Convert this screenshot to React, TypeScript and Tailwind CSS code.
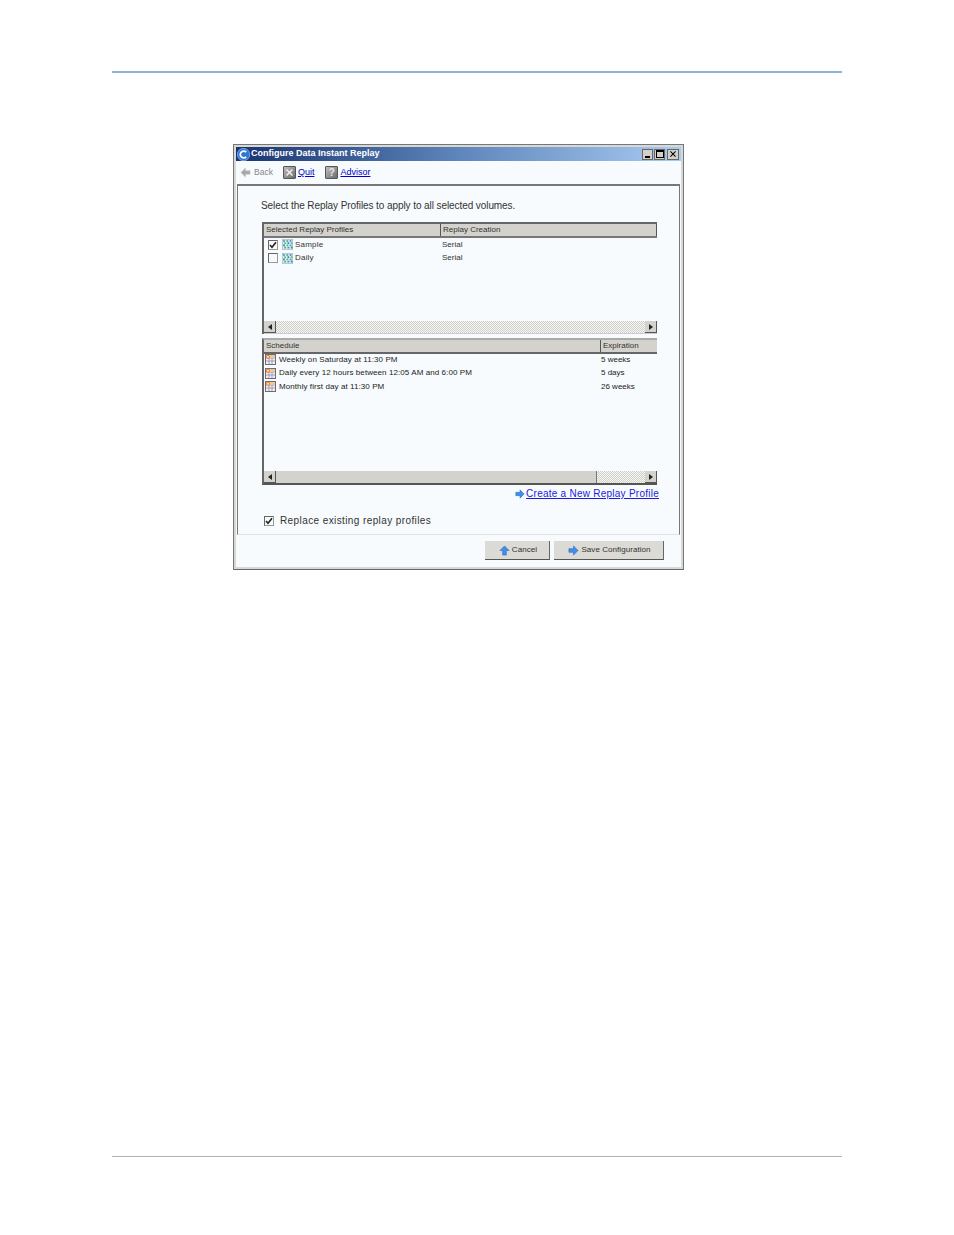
const font = "font-['Liberation_Sans',Arial,sans-serif]";
const dither = "bg-[repeating-conic-gradient(#d0cec8_0_25%,#f6f8f6_0_50%)] bg-[length:2px_2px]";

function ArrowIcon({ dir = "right", gray = false, size = 12 }: { dir?: "right" | "left" | "up"; gray?: boolean; size?: number }) {
  const rot = dir === "left" ? "rotate(180 6 6)" : dir === "up" ? "rotate(-90 6 6)" : undefined;
  return (
    <svg width={size} height={size} viewBox="0 0 12 12" className="shrink-0">
      <path
        d="M1 4h5V1l5 5-5 5V8H1z"
        transform={rot}
        fill={gray ? "#a8a8a8" : "#3f8fe8"}
        stroke={gray ? "#c4c4c4" : "#2a64c0"}
        strokeWidth="0.6"
      />
    </svg>
  );
}

function ProfileIcon() {
  const dots = [
    [1, 1, "#4a90e0"], [4, 1, "#58b070"], [7, 1, "#4a90e0"],
    [2, 3, "#60c080"], [5, 3, "#3a80d0"], [8, 3, "#60c080"],
    [1, 5, "#3a80d0"], [4, 5, "#60c080"], [7, 5, "#58b070"],
    [2, 7, "#58b070"], [5, 7, "#4a90e0"], [8, 7, "#3a80d0"],
  ] as const;
  return (
    <svg width="11" height="11" viewBox="0 0 10 10" className="mr-[2px] shrink-0">
      <rect x="0" y="0" width="10" height="10" fill="#dcecf2" />
      <path d="M0 .5h10M.5 0v10M9.5 0v10M0 9.5h10" stroke="#a8c0c4" strokeWidth="0.7" />
      {dots.map(([x, y, c], i) => (
        <rect key={i} x={x} y={y} width="1.6" height="1.6" fill={c} />
      ))}
    </svg>
  );
}

function CalendarIcon() {
  return (
    <svg width="11" height="11" viewBox="0 0 11 11" className="mr-[3px] shrink-0">
      <rect x="0.5" y="0.5" width="10" height="10" fill="#f4f0e8" stroke="#6a6a80" />
      <path d="M1 4h9M1 7h9M4 4v6M7 4v6" stroke="#8a90b0" strokeWidth="0.8" />
      <rect x="1" y="1" width="9" height="2.5" fill="#f4c890" />
      <circle cx="3" cy="2.8" r="2" fill="#f08030" />
      <circle cx="3" cy="2.8" r="1" fill="#fff0a0" />
    </svg>
  );
}

function AppIcon() {
  return (
    <svg width="13" height="13" viewBox="0 0 13 13" className="shrink-0">
      <circle cx="6.5" cy="6.5" r="6.2" fill="#2a78d8" stroke="#bcd8f4" strokeWidth="0.6" />
      <path d="M9.2 4.2A3.4 3.4 0 1 0 9.2 8.8" fill="none" stroke="#fff" strokeWidth="1.8" />
    </svg>
  );
}

function ToolIcon({ children }: { children: React.ReactNode }) {
  return (
    <span className="mr-[2px] flex h-[13px] w-[13px] items-center justify-center rounded-[1px] border border-[#555] bg-gradient-to-br from-[#c0c0c0] to-[#6c6c6c] text-[10px] leading-none font-bold text-[#e8e8e8]">
      {children}
    </span>
  );
}

function Check({ checked }: { checked: boolean }) {
  return (
    <span className="flex h-[10px] w-[10px] shrink-0 items-center justify-center border border-[#666] border-r-[#999] border-b-[#999] bg-[#f8fafa]">
      {checked && (
        <svg width="8" height="8" viewBox="0 0 8 8">
          <path d="M1 4L3 6.2L7 1.2" fill="none" stroke="#222" strokeWidth="1.6" />
        </svg>
      )}
    </span>
  );
}

function ScrollBtn({ dir }: { dir: "left" | "right" }) {
  return (
    <span className="flex h-[12px] w-[12px] shrink-0 items-center justify-center border-r border-b border-r-[#555] border-b-[#555] bg-[#d4d2cc]">
      <svg width="4" height="6" viewBox="0 0 4 6">
        <path d={dir === "left" ? "M4 0v6L0 3z" : "M0 0v6l4-3z"} fill="#222" />
      </svg>
    </span>
  );
}

function HeaderCell({ label, className }: { label: string; className: string }) {
  return (
    <div className={`flex h-[12px] items-center border-r border-r-[#555] bg-[#d4d2cc] pl-[2px] text-[#333] ${className}`}>
      {label}
    </div>
  );
}

function Button({ label, dir, className }: { label: string; dir: "up" | "right"; className: string }) {
  return (
    <div className={`flex h-[19px] items-center justify-center gap-[1px] border-r border-b border-r-[#666] border-b-[#555] bg-[#dcdad4] pl-[2px] text-[8px] text-[#333] ${className}`}>
      <ArrowIcon dir={dir} size={11} />
      <span className="ml-[1px] tracking-[0.06px]">{label}</span>
    </div>
  );
}

const schedules = [
  ["Weekly on Saturday at 11:30 PM", "5 weeks"],
  ["Daily every 12 hours between 12:05 AM and 6:00 PM", "5 days"],
  ["Monthly first day at 11:30 PM", "26 weeks"],
];

export default function App() {
  return (
    <div className={`flex h-[1235px] flex-col bg-white ${font}`}>
      <div className="mx-[112px] mt-[71px] h-[2px] shrink-0 bg-[#8fb4d4]" />
      <div className="mt-[71px] ml-[233px] flex h-[426px] w-[451px] shrink-0 flex-col border-[1px] border-[#777] border-b-[#666] bg-[#d8d8d4] p-[2px]">
        {/* title bar */}
        <div className="flex h-[14px] shrink-0 items-center bg-gradient-to-r from-[#1a3470] via-[#5f86bc] to-[#a8cbf0] pl-[1px]">
          <AppIcon />
          <span className="ml-[1px] text-[9px] font-bold text-white">Configure Data Instant Replay</span>
          <div className="mr-[2px] ml-auto flex gap-px">
            <span className="flex h-[11px] w-[11px] items-end justify-start border border-[#666] bg-[#d4d0c8] pb-px pl-[2px]">
              <span className="h-[2px] w-[5px] bg-black" />
            </span>
            <span className="flex h-[11px] w-[11px] items-center justify-center border border-[#666] bg-[#d4d0c8]">
              <span className="h-[8px] w-[8px] border border-t-2 border-black" />
            </span>
            <span className="ml-px flex h-[11px] w-[12px] items-center justify-center border border-[#666] bg-[#d4d0c8]">
              <svg width="6" height="6" viewBox="0 0 7 7">
                <path d="M.5.5l6 6M6.5.5l-6 6" stroke="#000" strokeWidth="1.2" />
              </svg>
            </span>
          </div>
        </div>
        {/* body */}
        <div className="flex min-h-0 flex-1 flex-col bg-[#f7fbfd]">
          {/* toolbar */}
          <div className="flex h-[23px] shrink-0 items-center pl-[4px] text-[9px]">
            <ArrowIcon dir="left" gray size={11} />
            <span className="mr-[10px] ml-[3px] text-[8.5px] text-[#888]">Back</span>
            <ToolIcon>
              <svg width="7" height="7" viewBox="0 0 7 7">
                <path d="M.5.5l6 6M6.5.5l-6 6" stroke="#f0f0f0" strokeWidth="1.5" />
              </svg>
            </ToolIcon>
            <span className="mr-[11px] text-[#0000cc] underline">Quit</span>
            <ToolIcon>?</ToolIcon>
            <span className="text-[#0000cc] underline">Advisor</span>
          </div>
          {/* content panel */}
          <div className="mx-px flex h-[351px] shrink-0 flex-col border-t-2 border-r border-b border-l border-t-[#777] border-r-[#777] border-b-[#e0e4e4] border-l-[#777] pt-[14px]">
            <div className="pl-[23px] text-[10px] leading-[12px] tracking-[-0.08px] text-[#333]">
              Select the Replay Profiles to apply to all selected volumes.
            </div>
            {/* profiles table */}
            <div className="mt-[10px] ml-[24px] flex h-[112px] w-[395px] shrink-0 flex-col border-t-2 border-l-2 border-t-[#666] border-l-[#666] text-[8px]">
              <div className="flex border-b-2 border-b-[#777]">
                <HeaderCell label="Selected Replay Profiles" className="w-[177px]" />
                <HeaderCell label="Replay Creation" className="flex-1" />
              </div>
              <div className="flex-1 text-[#333]">
                <div className="flex h-[13.5px] items-center pl-[4px]">
                  <Check checked />
                  <span className="ml-[4px]" />
                  <ProfileIcon />
                  <span className="w-[147px] tracking-[0.2px]">Sample</span>
                  <span>Serial</span>
                </div>
                <div className="flex h-[13.5px] items-center pl-[4px]">
                  <Check checked={false} />
                  <span className="ml-[4px]" />
                  <ProfileIcon />
                  <span className="w-[147px] tracking-[0.2px]">Daily</span>
                  <span>Serial</span>
                </div>
              </div>
              <div className="flex h-[13px] shrink-0 border-b border-b-[#ccc]">
                <ScrollBtn dir="left" />
                <div className={`flex-1 ${dither}`} />
                <ScrollBtn dir="right" />
              </div>
            </div>
            {/* schedule table */}
            <div className="mt-[4px] ml-[24px] flex h-[147px] w-[395px] shrink-0 flex-col border-t-2 border-b-2 border-l-2 border-t-[#aaa] border-b-[#555] border-l-[#666] text-[8px]">
              <div className="flex border-b-2 border-b-[#666]">
                <HeaderCell label="Schedule" className="w-[337px]" />
                <div className="flex h-[12px] flex-1 items-center bg-[#d4d2cc] pl-[2px] text-[#333]">Expiration</div>
              </div>
              <div className="-mt-px flex-1 text-[#222]">
                {schedules.map(([s, e]) => (
                  <div key={s} className="flex h-[13.5px] items-center pl-[1px]">
                    <CalendarIcon />
                    <span className="w-[322px] tracking-[0.08px]">{s}</span>
                    <span>{e}</span>
                  </div>
                ))}
              </div>
              <div className="flex h-[12px] shrink-0">
                <ScrollBtn dir="left" />
                <div className="flex-1 border-r border-r-[#777] bg-[#d4d2cc]" />
                <div className={`w-[48px] ${dither}`} />
                <ScrollBtn dir="right" />
              </div>
            </div>
            <div className="mt-[3px] flex w-[421px] items-center justify-end text-[10px] leading-[12px] tracking-[0.25px]">
              <ArrowIcon size={10} />
              <span className="ml-px text-[#1a1ae0] underline">Create a New Replay Profile</span>
            </div>
            <div className="mt-[15px] ml-[26px] flex items-center text-[10px] leading-[12px] tracking-[0.4px] text-[#333]">
              <Check checked />
              <span className="ml-[6px]">Replace existing replay profiles</span>
            </div>
          </div>
          {/* footer */}
          <div className="flex flex-1 items-start justify-end gap-[4px] pt-[6px] pr-[17px]">
            <Button label="Cancel" dir="up" className="w-[65px]" />
            <Button label="Save Configuration" dir="right" className="w-[110px]" />
          </div>
        </div>
      </div>
      <div className="mx-[112px] mt-[586px] h-px shrink-0 bg-[#aab4bc]" />
    </div>
  );
}
